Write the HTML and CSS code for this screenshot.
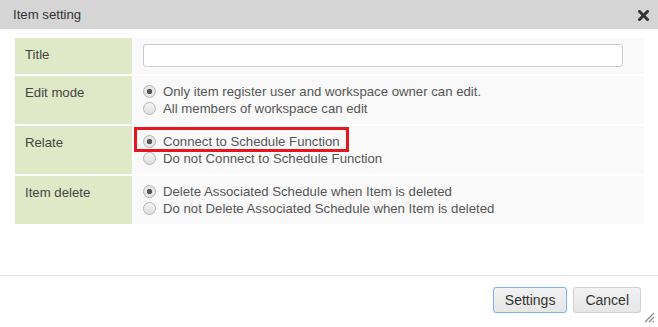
FILE: index.html
```html
<!DOCTYPE html>
<html lang="en">

<head>
    <meta charset="UTF-8">
    <title>Item setting</title>
    <link rel="stylesheet" href="styles.css">
</head>

<body>
    <div class="dialog">
        <div class="dialog-header">
            <span class="dialog-title">Item setting</span>
            <a href="#" class="close-btn" title="Close">
                <svg width="11" height="11" viewBox="0 0 11 11">
                    <path d="M1.5 1.5 L9.5 9.5 M9.5 1.5 L1.5 9.5" stroke="#333" stroke-width="3" stroke-linecap="square" />
                </svg>
            </a>
        </div>

        <div class="dialog-body">
            <table class="setting-table">
                <tr class="row-title">
                    <th>Title</th>
                    <td><input type="text" class="text-input"></td>
                </tr>
                <tr>
                    <th>Edit mode</th>
                    <td>
                        <label class="radio"><input type="radio" name="edit" checked> Only item register user and workspace owner can edit.</label>
                        <label class="radio"><input type="radio" name="edit"> All members of workspace can edit</label>
                    </td>
                </tr>
                <tr>
                    <th>Relate</th>
                    <td>
                        <label class="radio marked"><input type="radio" name="relate" checked> Connect to Schedule Function</label>
                        <label class="radio"><input type="radio" name="relate"> Do not Connect to Schedule Function</label>
                    </td>
                </tr>
                <tr>
                    <th>Item delete</th>
                    <td>
                        <label class="radio"><input type="radio" name="delete" checked> Delete Associated Schedule when Item is deleted</label>
                        <label class="radio"><input type="radio" name="delete"> Do not Delete Associated Schedule when Item is deleted</label>
                    </td>
                </tr>
            </table>
        </div>

        <div class="dialog-footer">
            <button class="button button-focus">Settings</button>
            <button class="button">Cancel</button>
        </div>

        <svg class="resize-grip" width="12" height="12" viewBox="0 0 12 12">
            <path d="M11 2 L2 11 M11 6 L6 11 M11 10 L10 11" stroke="#888" stroke-width="1.2" />
        </svg>
    </div>
</body>

</html>
```

FILE: styles.css
```css
html,
body {
    margin: 0;
    height: 100%;
}

body {
    font-family: "Liberation Sans", Arial, sans-serif;
    font-size: 13.2px;
    color: #555;
    background-color: #fff;
}

.dialog {
    position: relative;
    display: flex;
    flex-direction: column;
    height: 100%;
}

.dialog-header {
    height: 29px;
    flex: none;
    background-color: #d5d5d5;
    display: flex;
    align-items: center;
    justify-content: space-between;
    padding: 0 9px 0 13px;
}

.dialog-title {
    color: #333;
}

.close-btn {
    display: flex;
    margin-top: 1px;
}

.dialog-body {
    flex: 1;
    padding: 7px 12px 0 13px;
}

.setting-table {
    width: 100%;
    border-collapse: separate;
    border-spacing: 2px;
}

.setting-table th {
    width: 97px;
    background-color: #dfe9c8;
    color: #444;
    font-weight: normal;
    text-align: left;
    vertical-align: top;
    padding: 8px 10px;
    line-height: 17px;
}

.setting-table td {
    background-color: #f9f9f9;
    padding: 7px 9px;
    line-height: 17px;
    vertical-align: top;
}

.row-title td {
    padding: 6px 9px 7px 9px;
}

.text-input {
    display: block;
    box-sizing: border-box;
    width: 480px;
    height: 23px;
    border: 1px solid #ccc;
    border-radius: 3px;
    background-color: #fff;
    margin: 0;
}

.radio {
    display: flex;
    align-items: center;
    width: max-content;
    gap: 7px;
    height: 17px;
    color: #555;
}

.radio input {
    appearance: none;
    -webkit-appearance: none;
    width: 13px;
    height: 13px;
    margin: 0;
    border: 1px solid #b4b4b4;
    border-radius: 50%;
    background: linear-gradient(#f4f4f4, #dedede);
    box-sizing: border-box;
}

.radio input:checked {
    background: radial-gradient(circle, #555 0, #555 2.5px, #e6e6e6 3px);
}

.marked {
    position: relative;
}

.marked::after {
    content: "";
    position: absolute;
    left: -9px;
    right: -9px;
    top: -6px;
    bottom: -2px;
    border: 3px solid #e8141e;
}

.dialog-footer {
    flex: none;
    box-sizing: border-box;
    height: 52px;
    border-top: 1px solid #e5e5e5;
    display: flex;
    justify-content: flex-end;
    align-items: flex-start;
    gap: 6px;
    padding: 11px 17px 0 0;
}

.button {
    height: 26px;
    padding: 0 11px;
    font-family: "Liberation Sans", Arial, sans-serif;
    font-size: 14px;
    color: #333;
    background: linear-gradient(#f2f2f2, #e6e6e6);
    border: 1px solid #cfcfcf;
    border-radius: 3px;
}

.button-focus {
    border-color: #7db5ef;
    box-shadow: 0 0 1px #a8cdf3;
}

.resize-grip {
    position: absolute;
    right: 3px;
    bottom: 4px;
}
```
